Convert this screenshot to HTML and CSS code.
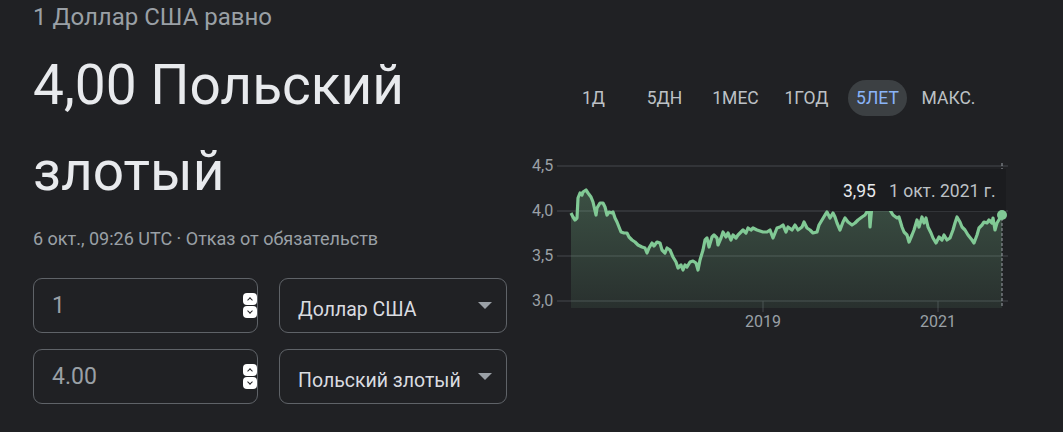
FILE: index.html
```html
<!DOCTYPE html>
<html lang="ru">
<head>
    <meta charset="UTF-8">
    <meta name="viewport" content="width=device-width, initial-scale=1.0">
    <title>Доллар США к польскому злотому</title>
    <link rel="stylesheet" href="styles.css">
</head>
<body>
    <div class="page">
        <section class="summary">
            <div class="lead">1 Доллар США равно</div>
            <div class="result">4,00 Польский злотый</div>
            <div class="meta">6 окт., 09:26 UTC · Отказ от обязательств</div>

            <div class="converter">
                <div class="row">
                    <div class="amount">
                        <span>1</span>
                        <span class="spin"><i class="up"></i><i class="down"></i></span>
                    </div>
                    <div class="currency">
                        <span>Доллар США</span>
                        <i class="caret"></i>
                    </div>
                </div>
                <div class="row">
                    <div class="amount">
                        <span>4.00</span>
                        <span class="spin"><i class="up"></i><i class="down"></i></span>
                    </div>
                    <div class="currency">
                        <span>Польский злотый</span>
                        <i class="caret"></i>
                    </div>
                </div>
            </div>
        </section>

        <section class="chart-col">
            <div class="ranges">
                <span class="range"><b>1Д</b></span>
                <span class="range"><b>5ДН</b></span>
                <span class="range"><b>1МЕС</b></span>
                <span class="range"><b>1ГОД</b></span>
                <span class="range active"><b>5ЛЕТ</b></span>
                <span class="range"><b>МАКС.</b></span>
            </div>

            <svg class="chart" width="543" height="190" viewBox="520 150 543 190">
                <defs>
                    <linearGradient id="area" gradientUnits="userSpaceOnUse" x1="0" y1="190" x2="0" y2="308">
                        <stop offset="0" stop-color="#81c995" stop-opacity="0.28"/>
                        <stop offset="1" stop-color="#81c995" stop-opacity="0.09"/>
                    </linearGradient>
                </defs>

                <!-- grid -->
                <g class="grid">
                    <line x1="557" y1="166" x2="1008" y2="166"/>
                    <line x1="557" y1="211" x2="1008" y2="211"/>
                    <line x1="557" y1="256" x2="1008" y2="256"/>
                    <line x1="557" y1="301" x2="1008" y2="301"/>
                    <line x1="763" y1="301" x2="763" y2="312"/>
                    <line x1="938" y1="301" x2="938" y2="312"/>
                </g>
                <g class="axis">
                    <text x="532" y="171">4,5</text>
                    <text x="532" y="216">4,0</text>
                    <text x="532" y="261">3,5</text>
                    <text x="532" y="306">3,0</text>
                    <text x="763" y="327" text-anchor="middle">2019</text>
                    <text x="938" y="327" text-anchor="middle">2021</text>
                </g>

                <polygon fill="url(#area)" points="571,308 571,213 573,217 575,220 577,218 578,198 580,193 582,195 583,192 586,190 588,193 591,197 593,202 596,215 597,208 600,203 603,203 605,207 607,215 609,212 612,213 613,212 615,218 617,222 619,227 621,232 624,233 627,233 629,237 632,240 635,242 638,245 642,247 645,248 647,253 649,248 652,243 654,246 657,242 660,243 662,250 665,253 667,248 670,250 673,257 676,262 678,268 681,265 683,270 685,265 687,267 690,262 693,261 696,263 698,270 700,260 703,250 705,240 707,238 709,247 712,237 714,235 717,238 718,245 721,238 723,232 726,237 728,233 731,240 733,235 736,238 738,235 741,232 743,230 746,233 748,228 751,230 753,228 757,230 760,231 763,232 767,232 770,230 773,238 777,228 780,227 783,225 786,232 788,227 792,230 795,225 798,230 802,227 804,222 807,228 810,230 813,233 817,232 819,225 822,220 825,215 827,212 830,218 833,213 835,217 837,223 840,230 843,222 845,218 848,222 852,225 855,223 858,220 862,217 865,215 868,210 869,206 870,227 872,205 876,198 880,196 884,200 888,205 890,210 893,215 897,218 899,217 902,227 904,232 907,235 909,242 912,235 914,230 917,220 919,227 922,217 924,223 926,218 928,227 931,233 933,238 936,243 939,237 942,240 944,235 947,240 950,238 953,230 955,223 957,217 960,222 962,227 965,230 968,235 972,240 974,243 977,235 979,228 982,225 984,222 987,223 989,220 992,223 993,218 995,230 997,223 1000,218 1002,215 1002,308"/>

                <polyline class="line" points="571,213 573,217 575,220 577,218 578,198 580,193 582,195 583,192 586,190 588,193 591,197 593,202 596,215 597,208 600,203 603,203 605,207 607,215 609,212 612,213 613,212 615,218 617,222 619,227 621,232 624,233 627,233 629,237 632,240 635,242 638,245 642,247 645,248 647,253 649,248 652,243 654,246 657,242 660,243 662,250 665,253 667,248 670,250 673,257 676,262 678,268 681,265 683,270 685,265 687,267 690,262 693,261 696,263 698,270 700,260 703,250 705,240 707,238 709,247 712,237 714,235 717,238 718,245 721,238 723,232 726,237 728,233 731,240 733,235 736,238 738,235 741,232 743,230 746,233 748,228 751,230 753,228 757,230 760,231 763,232 767,232 770,230 773,238 777,228 780,227 783,225 786,232 788,227 792,230 795,225 798,230 802,227 804,222 807,228 810,230 813,233 817,232 819,225 822,220 825,215 827,212 830,218 833,213 835,217 837,223 840,230 843,222 845,218 848,222 852,225 855,223 858,220 862,217 865,215 868,210 869,206 870,227 872,205 876,198 880,196 884,200 888,205 890,210 893,215 897,218 899,217 902,227 904,232 907,235 909,242 912,235 914,230 917,220 919,227 922,217 924,223 926,218 928,227 931,233 933,238 936,243 939,237 942,240 944,235 947,240 950,238 953,230 955,223 957,217 960,222 962,227 965,230 968,235 972,240 974,243 977,235 979,228 982,225 984,222 987,223 989,220 992,223 993,218 995,230 997,223 1000,218 1002,215"/>

                <line class="cursor" x1="1002" y1="163" x2="1002" y2="308"/>

                <!-- tooltip -->
                <rect class="tip" x="830" y="169" width="176" height="42"/>
                <text class="tip-value" x="843" y="197">3,95</text>
                <text class="tip-date" x="889" y="197">1 окт. 2021 г.</text>

                <circle cx="1002" cy="215" r="5" fill="#81c995"/>
            </svg>
        </section>
    </div>
</body>
</html>
```

FILE: styles.css
```css
body {
    margin: 0;
    background: #202124;
    color: #e8eaed;
    font-family: Roboto, "Liberation Sans", Arial, sans-serif;
    overflow: hidden;
}
.page {
    display: flex;
    width: 1063px;
    height: 432px;
}
.summary {
    width: 487px;
    padding-left: 33px;
}
.lead {
    padding-top: 1px;
    font-size: 24px;
    line-height: 32px;
    color: #9aa0a6;
}
.result {
    margin-top: 9px;
    font-size: 55px;
    line-height: 86px;
    color: #e8eaed;
}
.meta {
    margin-top: 13px;
    font-size: 18px;
    line-height: 24px;
    color: #9aa0a6;
    white-space: nowrap;
}
.converter {
    margin-top: 27px;
    display: flex;
    flex-direction: column;
    gap: 16px;
}
.row {
    display: flex;
    gap: 21px;
}
.amount,
.currency {
    box-sizing: border-box;
    height: 55px;
    border: 1px solid #5f6368;
    border-radius: 9px;
    display: flex;
    align-items: center;
    justify-content: space-between;
}
.amount {
    width: 225px;
    padding-left: 18px;
    font-size: 23px;
    color: #9aa0a6;
}
.currency {
    width: 228px;
    padding: 8px 14px 0 18px;
    font-size: 19.5px;
    color: #dadce0;
}
.currency .caret {
    margin-top: -8px;
    width: 0;
    height: 0;
    border-left: 7px solid transparent;
    border-right: 7px solid transparent;
    border-top: 7px solid #9aa0a6;
}
.spin {
    display: flex;
    flex-direction: column;
    width: 14px;
}
.spin i {
    position: relative;
    height: 12px;
    background: #fff;
    border-radius: 4px;
}
.spin i + i {
    margin-top: 1px;
}
.spin i::after {
    content: "";
    position: absolute;
    left: 5px;
    width: 3px;
    height: 3px;
    border-left: 1.5px solid #202124;
    border-top: 1.5px solid #202124;
}
.spin .up::after {
    top: 4.5px;
    transform: rotate(45deg);
}
.spin .down::after {
    top: 2.5px;
    transform: rotate(225deg);
}
.chart-col {
    flex: 1;
    padding-top: 80px;
}
.ranges {
    display: grid;
    grid-template-columns: repeat(6, 71px);
    margin-left: 38px;
    height: 36px;
}
.range {
    display: flex;
    justify-content: center;
    align-items: center;
    font-size: 17.5px;
    color: #bdc1c6;
}
.range b {
    font-weight: normal;
    padding: 0 8px;
    line-height: 36px;
    border-radius: 18px;
}
.range.active b {
    background: #3c4043;
    color: #8ab4f8;
}
.chart {
    display: block;
    margin-top: 34px;
    font-family: Roboto, "Liberation Sans", Arial, sans-serif;
}
.grid line {
    stroke: #45484c;
    stroke-width: 1;
}
.axis text {
    font-size: 16px;
    fill: #9aa0a6;
}
.line {
    fill: none;
    stroke: #81c995;
    stroke-width: 3.2;
    stroke-linejoin: round;
}
.cursor {
    stroke: #9aa0a6;
    stroke-width: 1;
    stroke-dasharray: 3 2;
}
.tip {
    fill: #1b1c1f;
}
.tip-value {
    font-size: 17.5px;
    fill: #e8eaed;
}
.tip-date {
    font-size: 17.5px;
    fill: #bdc1c6;
}
```
